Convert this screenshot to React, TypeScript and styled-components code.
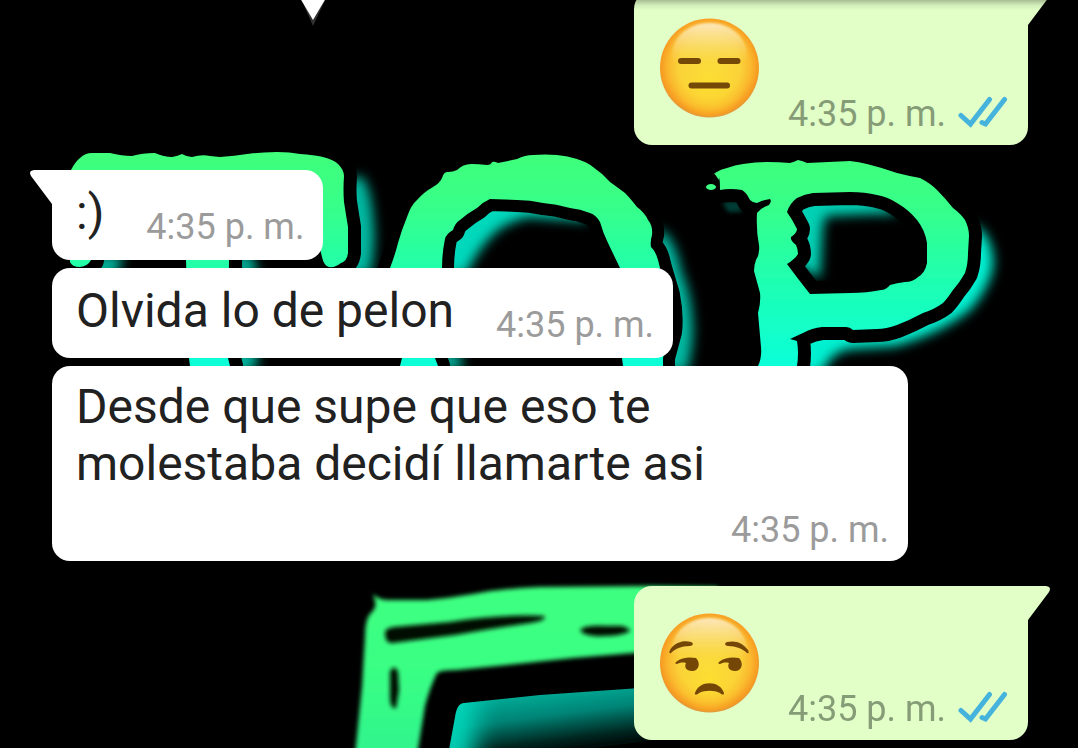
import React from "react";
import styled, { createGlobalStyle } from "styled-components";

const GlobalStyle = createGlobalStyle`
  *, *::before, *::after { box-sizing: border-box; }
  body {
    margin: 0;
    background: #000;
    font-family: Roboto, "Noto Sans", sans-serif;
  }
`;

const Screen = styled.main`
  position: relative;
  min-height: 100vh;
  overflow: hidden;
  background: #000;
`;

const Backdrop = styled.svg`
  position: absolute;
  top: 0;
  left: 0;
  width: 100%;
  height: 100%;
`;

const TopShade = styled.div`
  position: absolute;
  top: 0;
  left: 330px;
  right: 0;
  height: 10px;
  background: linear-gradient(rgba(0, 0, 0, 0.26), rgba(0, 0, 0, 0.08) 50%, transparent);
`;

/* The conversation is scrolled, so the first bubble starts above the screen. */
const Conversation = styled.ol`
  position: relative;
  display: flex;
  flex-direction: column;
  margin: -9px 0 0;
  padding: 0 50px 8px 52px;
  list-style: none;
`;

const Row = styled.li<{ $sent?: boolean; $first?: boolean }>`
  display: flex;
  justify-content: ${(p) => (p.$sent ? "flex-end" : "flex-start")};
  margin-top: ${(p) => (p.$first ? 25 : 8)}px;

  &:first-child {
    margin-top: 0;
  }
`;

const bubblePadding = (p: { $sent?: boolean; $stacked?: boolean }) => {
  if (p.$sent) return "27px 20px 10px 26px";
  return p.$stacked ? "12px 19px 10px 24px" : "14px 19px 12px 24px";
};

const Bubble = styled.article<{ $sent?: boolean; $tail?: boolean; $stacked?: boolean }>`
  position: relative;
  display: flex;
  flex-direction: ${(p) => (p.$stacked ? "column" : "row")};
  align-items: ${(p) => (p.$stacked ? "stretch" : "flex-end")};
  gap: ${(p) => (p.$stacked ? 17 : p.$sent ? 28 : 42)}px;
  width: ${(p) => (p.$stacked ? "min(100%, 856px)" : "auto")};
  padding: ${bubblePadding};
  border-radius: 18px;
  border-top-left-radius: ${(p) => (p.$tail && !p.$sent ? 0 : 18)}px;
  border-top-right-radius: ${(p) => (p.$tail && p.$sent ? 0 : 18)}px;
  background: ${(p) => (p.$sent ? "#e1ffc7" : "#fff")};
`;

const Tail = styled.svg<{ $sent?: boolean }>`
  position: absolute;
  top: 0;
  ${(p) => (p.$sent ? "left: 100%;" : "right: 100%; transform: scaleX(-1);")}
  width: 22px;
  height: 35px;
  fill: ${(p) => (p.$sent ? "#e1ffc7" : "#fff")};
`;

const Message = styled.p<{ $stacked?: boolean }>`
  margin: 0;
  padding-right: ${(p) => (p.$stacked ? 80 : 0)}px;
  padding-bottom: ${(p) => (p.$stacked ? 0 : 7)}px;
  color: #212121;
  font-size: 48px;
  line-height: 57px;
`;

const Meta = styled.footer<{ $sent?: boolean }>`
  display: flex;
  align-items: center;
  justify-content: flex-end;
  gap: 12px;
  color: ${(p) => (p.$sent ? "#869c77" : "#9b9b9b")};
  font-size: 36px;
  line-height: 42px;
  white-space: nowrap;
`;

const EmojiBox = styled.svg`
  flex: none;
  width: 100px;
  height: 100px;
  margin-bottom: 17px;
`;

const TickIcon = styled.svg`
  flex: none;
  width: 50px;
  height: 32px;
  margin-top: -5px;
  fill: none;
  stroke: #45b3dc;
  stroke-width: 5;
  stroke-linecap: round;
`;

const T_PATH =
  "M70 262 C68 220 66 190 71 170 Q75 162 80 158 Q85 153 92 153 L110 153 Q122 156 132 156 Q142 153 155 153 Q164 157 172 157 Q178 156 182 154 Q187 157 192 157 Q202 154 210 156 L220 157 Q235 156 247 154 Q262 152 277 152 Q290 152 300 154 Q314 155 323 157 Q334 160 338 164 Q344 170 344 176 Q343 190 344 202 Q346 215 348 227 L348 253 Q347 261 341 263 Q335 268 329 267 Q324 266 322 257 L318 240 L318 200 L229 200 L229 260 L228 358 L230 366 L190 366 L189 358 L186 260 L186 200 L95 200 L91 260 Q88 266 80 267 Q72 267 70 262 Z";

const O_PATH =
  "M390 268 Q395 255 398 243 Q402 229 407 217 Q411 205 417 200 Q424 192 433 187 Q440 183 442 178 Q444 171 448 172 Q453 172 457 170 Q463 164 471 164 Q479 164 487 165 Q491 165 492 162 Q494 161 498 163 Q508 161 517 159 Q525 155 533 155 Q545 154 557 155 Q568 156 577 159 Q587 162 593 167 Q602 173 610 182 Q617 187 625 193 Q630 198 637 207 Q645 213 648 220 Q653 226 652 235 Q650 242 651 247 Q656 252 658 260 L660 268 L668 295 Q672 315 670 332 L663 358 L663 366 L623 366 L622 358 L628 310 L620 268 L608 243 Q603 233 600 222 Q596 215 590 213 Q580 209 570 208 Q556 204 543 203 Q530 200 517 200 L490 199 Q483 202 477 208 Q468 213 460 220 Q455 223 453 230 Q446 234 445 239 Q442 253 442 268 L435 310 L435 358 L438 366 L400 366 L402 358 Z";

const P_PATH =
  "M715 173 Q721 169 727 168 Q735 165 743 164 Q755 162 767 162 Q779 162 790 163 Q794 162 798 160 Q803 161 807 163 Q829 162 850 161 Q859 162 867 164 Q883 168 897 173 Q909 176 920 178 Q930 183 937 190 Q945 198 953 208 Q961 214 965 220 Q969 228 969 236 L968 253 Q968 264 965 273 Q960 282 953 290 Q947 299 943 303 Q935 309 923 313 Q910 320 897 325 Q886 329 877 329 L853 330 Q850 327 846 327 L822 327 Q812 328 803 333 L790 339 L797 341 Q799 353 797 366 L758 366 Q762 358 761 347 L758 313 Q761 302 760 293 Q757 282 754 271 Q754 265 756 260 Q760 254 759 245 Q756 230 757 213 Q762 207 769 205 Q772 201 770 199 Q762 200 757 203 Q753 203 750 200 Q746 192 742 190 Q730 188 720 190 Q720 180 719 177 Z M787 212 Q790 203 797 198 Q805 194 813 193 L850 192 Q865 192 877 195 Q888 197 897 203 Q909 210 917 220 Q925 230 927 243 L927 263 Q925 273 918 277 Q913 282 905 282 Q897 283 890 285 Q886 290 881 290 Q867 293 850 293 L810 294 Q798 279 787 264 Q795 259 798 254 Q798 249 796 245 Q790 240 791 237 Q797 233 797 229 Q792 219 787 212 Z";

const E_PATH =
  "M373 594 Q379 600 388 600 L427 600 Q450 598 473 594 Q506 588 540 587 L650 586 L718 587 L718 645 L634 653 L573 658 L507 665 L457 670 Q440 670 437 673 Q430 687 425 706 L417 755 L355 755 L362 687 L365 637 Q365 620 370 614 Q377 608 375 601 Z";

function Wallpaper() {
  return (
    <Backdrop viewBox="0 0 1078 748" preserveAspectRatio="xMidYMin slice" aria-hidden="true">
      <defs>
        <linearGradient id="neon" gradientUnits="userSpaceOnUse" x1="0" y1="150" x2="0" y2="366">
          <stop offset="0" stopColor="#40ff7a" />
          <stop offset="0.25" stopColor="#38ff88" />
          <stop offset="0.6" stopColor="#1fffb0" />
          <stop offset="0.82" stopColor="#12ffc8" />
          <stop offset="1" stopColor="#10ffd8" />
        </linearGradient>
        <linearGradient id="neonLow" gradientUnits="userSpaceOnUse" x1="0" y1="585" x2="0" y2="748">
          <stop offset="0" stopColor="#3eff80" />
          <stop offset="0.5" stopColor="#3aff84" />
          <stop offset="1" stopColor="#30f58c" />
        </linearGradient>
        <linearGradient id="lowFade" gradientUnits="userSpaceOnUse" x1="590" y1="688" x2="598" y2="750">
          <stop offset="0" stopColor="#00a894" />
          <stop offset="0.35" stopColor="#008476" />
          <stop offset="0.75" stopColor="#002822" />
          <stop offset="1" stopColor="#000" />
        </linearGradient>
        <filter id="soft" x="-30%" y="-30%" width="160%" height="160%">
          <feGaussianBlur stdDeviation="6" />
        </filter>
        <filter id="wide" x="-60%" y="-60%" width="220%" height="220%">
          <feGaussianBlur stdDeviation="12" />
        </filter>
        <filter id="edge">
          <feGaussianBlur stdDeviation="0.7" />
        </filter>
        <filter id="smear" x="-20%" y="-50%" width="140%" height="200%">
          <feGaussianBlur stdDeviation="2" />
        </filter>
        <clipPath id="lowGlow">
          <path d="M448 755 L455 717 Q457 703 464 703 L540 695 L640 688 L700 686 L700 755 Z" />
        </clipPath>
      </defs>

      <g fill="#00b8a0" filter="url(#soft)">
        <path d="M345 180 L362 176 Q371 190 373 215 Q377 245 370 275 L340 275 Z" />
        <path d="M92 256 L124 256 L116 275 L92 275 Z M235 255 L252 255 L258 275 L235 275 Z M228 350 L256 350 L258 366 L235 376 Z" />
        <path d="M655 228 L667 234 Q678 250 681 270 Q692 295 693 325 Q694 345 687 372 L655 372 Z" />
        <path d="M440 350 L460 355 L464 368 L440 370 Z" />
      </g>
      <path
        d="M440 275 L444 235 L480 200 L520 198 L580 206 L588 221 L560 219 L528 217 Q502 223 488 240 Q474 256 466 275 Z"
        fill="#00d8bc"
        filter="url(#soft)"
      />
      <path
        d="M790 194 L850 192 Q885 198 898 214 L870 214 L826 216 Q822 225 822 245 L820 278 L790 262 Z"
        fill="#00d0b4"
        filter="url(#soft)"
      />
      <path
        d="M962 222 L982 230 Q995 246 993 268 Q988 290 970 310 Q940 334 895 346 L850 349 Q830 352 822 374 L795 374 L798 330 L850 315 L940 285 Z"
        fill="#00f0d0"
        filter="url(#soft)"
      />
      <path d="M722 202 L738 200 L742 212 L728 212 Z" fill="#003c34" filter="url(#smear)" />

      <g stroke="#000" strokeWidth="26" strokeLinejoin="round" fill="#000" fillRule="evenodd" filter="url(#edge)">
        <path d={T_PATH} />
        <path d={O_PATH} fillOpacity="0" strokeWidth="24" />
        <path d={P_PATH} fillOpacity="0" />
      </g>
      <g fill="url(#neon)" fillRule="evenodd" filter="url(#edge)">
        <path d={T_PATH} />
        <path d={O_PATH} />
        <path d={P_PATH} />
        <ellipse cx="711" cy="187" rx="5" ry="3" />
        <path d="M714 173 L720 174 L719 180 Z" />
      </g>

      <g clipPath="url(#lowGlow)" filter="url(#edge)">
        <path d="M440 680 H700 V760 H440 Z" fill="url(#lowFade)" />
        <path d="M430 790 L438 680 L478 680 L470 790 Z" fill="#00d4b8" filter="url(#wide)" />
      </g>
      <path d={E_PATH} fill="url(#neonLow)" filter="url(#smear)" />
      <g fill="#001004" filter="url(#smear)">
        <path d="M385 632 Q386 628 394 627 L450 622 Q500 614 544 616 Q548 620 530 623 Q490 629 455 635 L392 643 Q385 644 385 632 Z" />
        <path d="M580 630 Q585 625 605 626 L622 626 Q631 629 630 631 Q622 636 604 636 Q584 637 580 630 Z" />
        <path d="M390 672 Q394 663 398 672 L399 690 L396 708 Q390 710 390 696 Z" />
      </g>

      <path d="M299 -6 L313 26 L328 -6 Z" fill="#303030" />
      <path d="M300 -2 L313 20 L326 -2 Z" fill="#fff" />
    </Backdrop>
  );
}

function Face({ id, label, children }: { id: string; label: string; children: React.ReactNode }) {
  return (
    <EmojiBox viewBox="0 0 100 100" role="img" aria-label={label}>
      <defs>
        <radialGradient id={`${id}-skin`} cx="0.5" cy="0.48" r="0.52">
          <stop offset="0" stopColor="#f9da45" />
          <stop offset="0.6" stopColor="#fad239" />
          <stop offset="0.8" stopColor="#fab92e" />
          <stop offset="0.94" stopColor="#f79c22" />
          <stop offset="1" stopColor="#e0983a" />
        </radialGradient>
        <radialGradient id={`${id}-chin`} cx="0.5" cy="0.66" r="0.36">
          <stop offset="0" stopColor="#fde02c" stopOpacity="0.8" />
          <stop offset="1" stopColor="#fdd92c" stopOpacity="0" />
        </radialGradient>
        <linearGradient id={`${id}-shine`} x1="0" y1="0" x2="0" y2="1">
          <stop offset="0" stopColor="#fdebc4" stopOpacity="0.95" />
          <stop offset="0.45" stopColor="#fbe292" stopOpacity="0.7" />
          <stop offset="1" stopColor="#fade62" stopOpacity="0.05" />
        </linearGradient>
        <filter id={`${id}-blend`}>
          <feGaussianBlur stdDeviation="1" />
        </filter>
      </defs>
      <circle cx="49.5" cy="50" r="49.5" fill={`url(#${id}-skin)`} />
      <circle cx="49.5" cy="50" r="49" fill={`url(#${id}-chin)`} />
      <path
        d="M12 42 C10 20 28 5 49.5 5 C71 5 89 20 87 42 C80 45 66 44 49.500 44 C33 44 19 45 12 42 Z"
        fill={`url(#${id}-shine)`}
        filter={`url(#${id}-blend)`}
      />
      {children}
    </EmojiBox>
  );
}

function ExpressionlessFace() {
  return (
    <Face id="flat" label="Cara sin expresión">
      <g stroke="#744806" strokeWidth="6" strokeLinecap="round">
        <path d="M21 43 H38" />
        <path d="M60.500 43 H77.500" />
        <path d="M31.500 67.500 H67" />
      </g>
    </Face>
  );
}

function UnamusedFace() {
  return (
    <Face id="unamused" label="Cara de desaprobación">
      <g fill="#744706">
        <path d="M10 37 C15 29 24 27 31 29 C34 30 33 33 30 33 C21 33 15 36 11 40 C9 41 9 39 10 37 Z" />
        <path d="M88 37 C83 30 76 27 67 29 C64 30 65 33 68 33 C76 33 83 36 87 40 C89 41 89 39 88 37 Z" />
        <path d="M16 49 C22 44 30 44 36 45 C41 50 39 58 32 58 C26 58 24 54 26 50 C22 49 19 50 17 51 C15 51 15 50 16 49 Z" />
        <path d="M59 49 C65 44 73 44 79 45 C84 50 82 58 75 58 C69 58 67 54 69 50 C65 49 62 50 60 51 C58 51 58 50 59 49 Z" />
        <path d="M35 80 C39 67 60 67 64 80 C64 82 62 82 60 80 C54 77 45 77 39 80 C37 82 34 82 35 80 Z" />
      </g>
    </Face>
  );
}

function Ticks() {
  return (
    <TickIcon viewBox="0 0 50 32" role="img" aria-label="Leído" strokeLinejoin="miter">
      <path d="M3 19.500 L12.500 28 L31.500 3.500" />
      <path d="M24 26.500 L27.500 28 L46.500 3.500" />
    </TickIcon>
  );
}

function BubbleTail({ sent }: { sent?: boolean }) {
  return (
    <Tail $sent={sent} viewBox="0 0 22 35" aria-hidden="true">
      <path d="M-1 0 H18 Q24 1 21 6 L0 34 H-1 Z" />
    </Tail>
  );
}

function SentEmoji({ children, first }: { children: React.ReactNode; first?: boolean }) {
  return (
    <Row $sent $first={first}>
      <Bubble $sent $tail>
        <BubbleTail sent />
        {children}
        <Meta $sent>
          <time dateTime="16:35">4:35 p. m.</time>
          <Ticks />
        </Meta>
      </Bubble>
    </Row>
  );
}

function Received({ text, first, stacked }: { text: string; first?: boolean; stacked?: boolean }) {
  return (
    <Row $first={first}>
      <Bubble $tail={first} $stacked={stacked}>
        {first && <BubbleTail />}
        <Message $stacked={stacked}>{text}</Message>
        <Meta>
          <time dateTime="16:35">4:35 p. m.</time>
        </Meta>
      </Bubble>
    </Row>
  );
}

export default function App() {
  return (
    <Screen>
      <GlobalStyle />
      <Wallpaper />
      <Conversation>
        <SentEmoji>
          <ExpressionlessFace />
        </SentEmoji>
        <Received first text=":)" />
        <Received text="Olvida lo de pelon" />
        <Received stacked text="Desde que supe que eso te molestaba decidí llamarte asi" />
        <SentEmoji first>
          <UnamusedFace />
        </SentEmoji>
      </Conversation>
      <TopShade />
    </Screen>
  );
}
